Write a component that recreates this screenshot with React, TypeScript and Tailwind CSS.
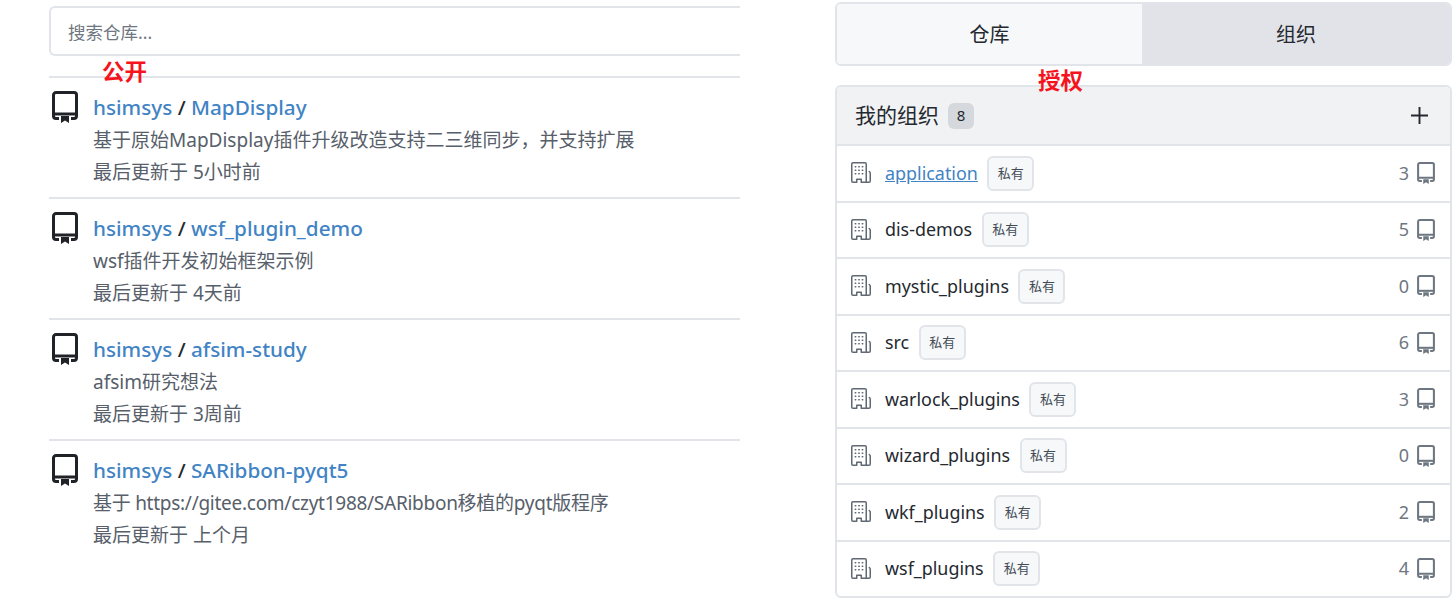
import { GoOrganization } from 'react-icons/go';

const repos = [
  { name: 'MapDisplay', desc: '基于原始MapDisplay插件升级改造支持二三维同步，并支持扩展', time: '最后更新于 5小时前' },
  { name: 'wsf_plugin_demo', desc: 'wsf插件开发初始框架示例', time: '最后更新于 4天前' },
  { name: 'afsim-study', desc: 'afsim研究想法', time: '最后更新于 3周前' },
  { name: 'SARibbon-pyqt5', desc: '基于 https://gitee.com/czyt1988/SARibbon移植的pyqt版程序', time: '最后更新于 上个月', tight: true },
];

const orgs = [
  { name: 'application', count: 3, link: true },
  { name: 'dis-demos', count: 5 },
  { name: 'mystic_plugins', count: 0 },
  { name: 'src', count: 6 },
  { name: 'warlock_plugins', count: 3 },
  { name: 'wizard_plugins', count: 0 },
  { name: 'wkf_plugins', count: 2 },
  { name: 'wsf_plugins', count: 4 },
];

function RepoIcon({ className }: { className: string }) {
  return (
    <svg viewBox="0 0 26 32" className={className} fill="none" stroke="currentColor" strokeWidth="3">
      <path d="M7 27.5H4a2.5 2.5 0 0 1-2.5-2.5V4A2.5 2.5 0 0 1 4 1.5h18A2.5 2.5 0 0 1 24.5 4v21a2.5 2.5 0 0 1-2.5 2.5h-3" />
      <path d="M1.5 23h23" />
      <path d="M9 25h8v7l-4-2.5L9 32z" fill="currentColor" stroke="none" />
    </svg>
  );
}

export default function App() {
  return (
    <div className="relative flex h-[607px] w-[1456px] overflow-hidden bg-white font-['Noto_Sans','Noto_Sans_CJK_SC',sans-serif] text-[#24292f]">
      <div className="ml-[49px] w-[691px] pt-[6px]">
        <div className="flex h-[50px] items-center rounded-l-[6px] border-2 border-r-0 border-[#e1e5ea] pl-[17px] pt-[2px] text-[17.5px] text-[#6e7781]">
          搜索仓库...
        </div>
        <div className="mt-[20px]">
          {repos.map((repo) => (
            <div key={repo.name} className="flex h-[121px] border-t-2 border-[#e1e5ea] pl-[3px] pt-[13px]">
              <RepoIcon className="h-[32px] w-[26px] shrink-0 text-[#1f2328]" />
              <div className="ml-[15px]">
                <div className="mt-[1px] text-[20.7px] leading-[30px] font-medium text-[#4183c4]">
                  hsimsys <span className="text-[#24292f]">/</span> {repo.name}
                </div>
                <div className={`mt-[2px] text-[19px] leading-[32px] text-[#57606a] ${repo.tight ? 'tracking-[-0.27px]' : ''}`}>{repo.desc}</div>
                <div className="text-[19px] leading-[32px] text-[#57606a]">{repo.time}</div>
              </div>
            </div>
          ))}
        </div>
      </div>

      <div className="ml-[95px] w-[617px] pt-[2px]">
        <div className="flex h-[64px] overflow-hidden rounded-[6px] border-2 border-[#e1e5ea] text-[20px]">
          <div className="flex w-[305px] items-center justify-center bg-[#f6f8fa] pt-[2px]">仓库</div>
          <div className="flex flex-1 items-center justify-center bg-[#e2e3e8] pt-[2px]">组织</div>
        </div>
        <div className="mt-[19px] overflow-hidden rounded-[6px] border-2 border-[#e1e5ea]">
          <div className="flex h-[57px] items-center bg-[#f1f2f4] pl-[18px] pr-[22px]">
            <span className="text-[21px]">我的组织</span>
            <span className="ml-[9px] flex h-[26px] w-[26px] items-center justify-center rounded-[6px] bg-[#d5d8dc] text-[15px]">8</span>
            <svg viewBox="0 0 16 16" className="ml-auto h-[17px] w-[17px]" fill="none" stroke="currentColor" strokeWidth="1.8">
              <path d="M8 0v16M0 8h16" />
            </svg>
          </div>
          {orgs.map((org) => (
            <div key={org.name} className="flex h-[56.5px] items-center border-t-2 border-[#e1e5ea] pl-[12px] pr-[15px]">
              <GoOrganization className="h-[24px] w-[24px] shrink-0 text-[#5f6873]" />
              <span className={`ml-[12px] text-[17.9px] ${org.link ? 'text-[#4183c4] underline' : ''}`}>{org.name}</span>
              <span className="ml-[9.5px] flex h-[35px] w-[47px] items-center justify-center rounded-[6px] border-2 border-[#e1e5ea] bg-[#f6f8fa] text-[13px] text-[#444c56]">
                私有
              </span>
              <span className="ml-auto text-[18px] text-[#6e7781]">{org.count}</span>
              <RepoIcon className="ml-[8px] h-[22px] w-[18px] text-[#6e7781]" />
            </div>
          ))}
        </div>
      </div>

      <div className="absolute left-[102px] top-[58px] text-[22.5px] font-bold leading-[28px] text-[#f5141e]">公开</div>
      <div className="absolute left-[1038px] top-[67px] text-[22.5px] font-bold leading-[28px] text-[#f5141e]">授权</div>
    </div>
  );
}
